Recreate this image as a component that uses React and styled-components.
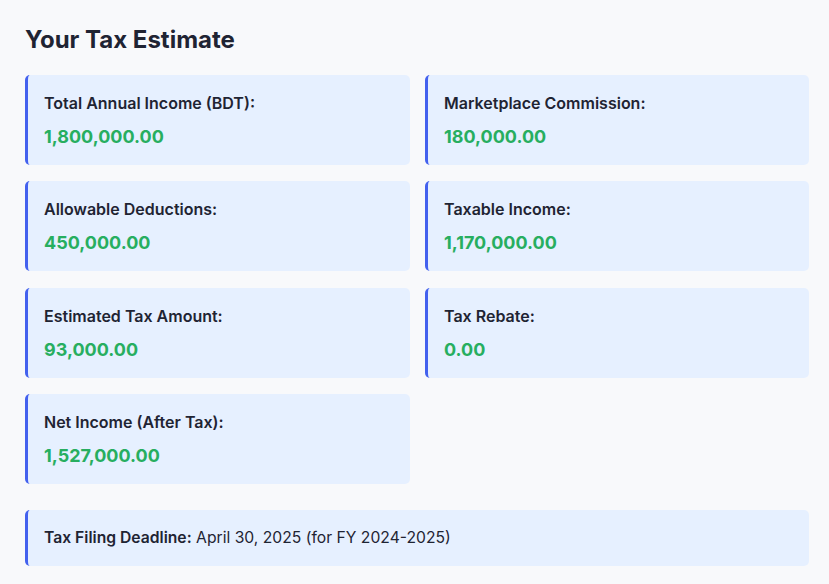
import React from "react";
import styled, { createGlobalStyle } from "styled-components";

const Global = createGlobalStyle`
  html, body { margin: 0; padding: 0; background: #f8f9fb; }
  body { font-family: Inter, "Noto Sans", sans-serif; color: #1f2433; }
`;

const Page = styled.div`
  padding: 23px 20px 18px 25px;
  min-height: 584px;
  box-sizing: border-box;
`;

const Title = styled.h2`
  margin: 0 0 18px;
  font-size: 24px;
  line-height: 34px;
  font-weight: 700;
  color: #1f2433;
`;

const Grid = styled.div`
  display: grid;
  grid-template-columns: 385px 384px;
  column-gap: 15px;
  row-gap: 16.4px;
`;

const Card = styled.div`
  background: #e6f0ff;
  border-left: 3px solid #4361ee;
  border-radius: 5px;
  padding: 17px 16px 0;
  height: 90px;
  box-sizing: border-box;
`;

const Label = styled.div`
  font-size: 16px;
  font-weight: 600;
  line-height: 22px;
  color: #1f2433;
`;

const Value = styled.div`
  margin-top: 11px;
  font-size: 18px;
  font-weight: 700;
  line-height: 24px;
  color: #27ae60;
`;

const Note = styled(Card)`
  margin-top: 26px;
  font-size: 15.7px;
  line-height: 22px;
  color: #1f2433;
  width: 784px;
  height: 56px;
  padding: 17px 16px;
`;

const Strong = styled.strong`
  font-weight: 600;
`;

const items = [
  ["Total Annual Income (BDT):", "1,800,000.00"],
  ["Marketplace Commission:", "180,000.00"],
  ["Allowable Deductions:", "450,000.00"],
  ["Taxable Income:", "1,170,000.00"],
  ["Estimated Tax Amount:", "93,000.00"],
  ["Tax Rebate:", "0.00"],
  ["Net Income (After Tax):", "1,527,000.00"],
];

export default function App() {
  return (
    <Page>
      <Global />
      <Title>Your Tax Estimate</Title>
      <Grid>
        {items.map(([l, v]) => (
          <Card key={l}>
            <Label>{l}</Label>
            <Value>{v}</Value>
          </Card>
        ))}
      </Grid>
      <Note>
        <Strong>Tax Filing Deadline:</Strong> April 30, 2025 (for FY 2024-2025)
      </Note>
    </Page>
  );
}
